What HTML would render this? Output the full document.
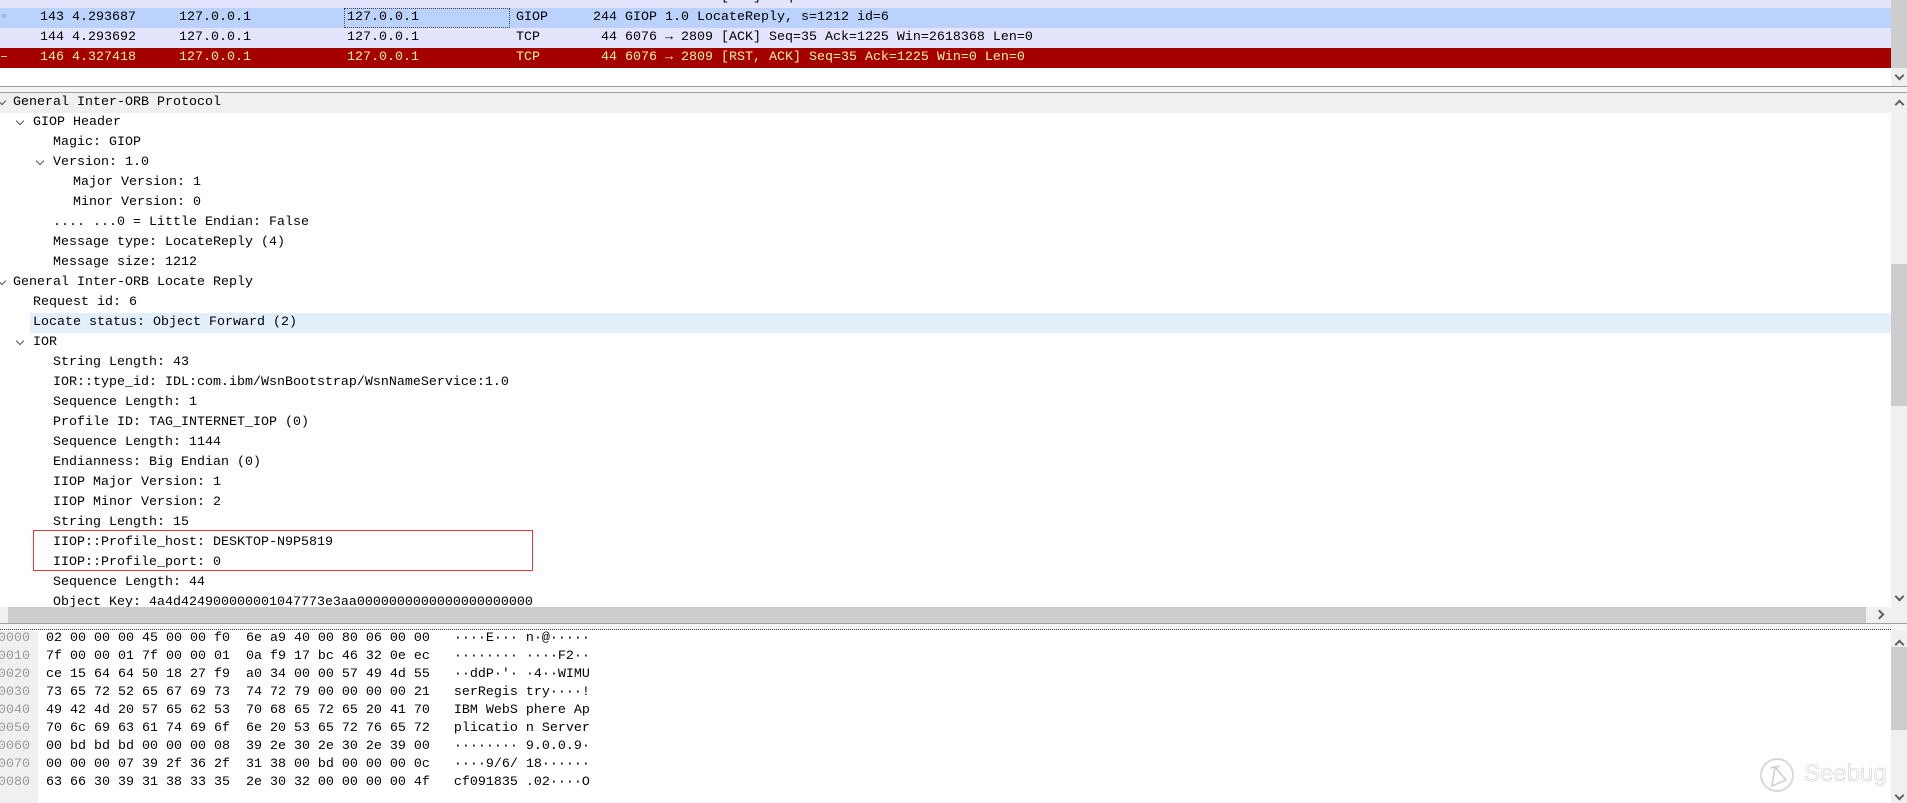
<!DOCTYPE html>
<html><head><meta charset="utf-8"><style>
*{margin:0;padding:0;box-sizing:border-box}
body{width:1907px;height:803px;overflow:hidden;background:#fff;font-family:"Liberation Mono",monospace;font-size:13.33px;color:#000;position:relative}
.abs{position:absolute}
.row{position:absolute;left:0;width:1891px;height:20px;line-height:20px;white-space:pre}
.row span{position:absolute;top:0}
.d{position:absolute;height:20px;line-height:20px;white-space:pre}
.arr{position:absolute;width:6px;height:6px;border-right:1.5px solid #555;border-bottom:1.5px solid #555;transform:rotate(45deg)}
.sb{position:absolute;background:#f0f0f0}
.chev{position:absolute;width:7px;height:7px;border-right:2px solid #606060;border-bottom:2px solid #606060}
pre{font-family:"Liberation Mono",monospace;font-size:13.33px;line-height:18px}
</style></head><body>

<!-- packet list -->
<div class="row" style="top:-12px;background:#e4e4fc"><span style="left:40px">142 4.293678</span><span style="left:179px">127.0.0.1</span><span style="left:347px">127.0.0.1</span><span style="left:516px">TCP</span><span style="left:601px">44 6076 → 2809 [ACK] Seq=35 Ack=1225 Win=2618624 Len=0</span></div>
<div class="row" style="top:8px;background:#bad2fc"><span style="left:0;color:#777">◦</span><span style="left:40px">143 4.293687</span><span style="left:179px">127.0.0.1</span><span style="left:344px;width:166px;height:20px;border:1px dotted #444;padding-left:2px;line-height:18px">127.0.0.1</span><span style="left:516px">GIOP</span><span style="left:593px">244 GIOP 1.0 LocateReply, s=1212 id=6</span></div>
<div class="row" style="top:28px;background:#e4e4fc"><span style="left:40px">144 4.293692</span><span style="left:179px">127.0.0.1</span><span style="left:347px">127.0.0.1</span><span style="left:516px">TCP</span><span style="left:601px">44 6076 → 2809 [ACK] Seq=35 Ack=1225 Win=2618368 Len=0</span></div>
<div class="row" style="top:48px;background:#a40000;color:#fff59d"><span style="left:0">–</span><span style="left:40px">146 4.327418</span><span style="left:179px">127.0.0.1</span><span style="left:347px">127.0.0.1</span><span style="left:516px">TCP</span><span style="left:601px">44 6076 → 2809 [RST, ACK] Seq=35 Ack=1225 Win=0 Len=0</span></div>
<div class="sb" style="left:1891px;top:0;width:16px;height:86px"></div>
<div class="abs" style="left:1891px;top:0;width:16px;height:68px;background:#cdcdcd"></div>
<div class="chev" style="left:1896px;top:72px;transform:rotate(45deg)"></div>
<div class="abs" style="left:0;top:86px;width:1907px;height:1px;background:#a0a0a0"></div>
<div class="abs" style="left:0;top:87px;width:1907px;height:5px;background:#f5f5f5"></div>
<div class="abs" style="left:0;top:92px;width:1907px;height:1px;background:#a0a0a0"></div>

<!-- details -->
<div class="abs" style="left:0;top:93px;width:1891px;height:20px;background:#f0f0f0"></div>
<div class="abs" style="left:30px;top:313px;width:1861px;height:20px;background:#e3f0fc"></div>
<div class="arr" style="left:-1px;top:98px"></div>
<div class="d" style="left:13px;top:93px">General Inter-ORB Protocol</div>
<div class="arr" style="left:17px;top:118px"></div>
<div class="d" style="left:33px;top:113px">GIOP Header</div>
<div class="d" style="left:53px;top:133px">Magic: GIOP</div>
<div class="arr" style="left:37px;top:158px"></div>
<div class="d" style="left:53px;top:153px">Version: 1.0</div>
<div class="d" style="left:73px;top:173px">Major Version: 1</div>
<div class="d" style="left:73px;top:193px">Minor Version: 0</div>
<div class="d" style="left:53px;top:213px">.... ...0 = Little Endian: False</div>
<div class="d" style="left:53px;top:233px">Message type: LocateReply (4)</div>
<div class="d" style="left:53px;top:253px">Message size: 1212</div>
<div class="arr" style="left:-1px;top:278px"></div>
<div class="d" style="left:13px;top:273px">General Inter-ORB Locate Reply</div>
<div class="d" style="left:33px;top:293px">Request id: 6</div>
<div class="d" style="left:33px;top:313px">Locate status: Object Forward (2)</div>
<div class="arr" style="left:17px;top:338px"></div>
<div class="d" style="left:33px;top:333px">IOR</div>
<div class="d" style="left:53px;top:353px">String Length: 43</div>
<div class="d" style="left:53px;top:373px">IOR::type_id: IDL:com.ibm/WsnBootstrap/WsnNameService:1.0</div>
<div class="d" style="left:53px;top:393px">Sequence Length: 1</div>
<div class="d" style="left:53px;top:413px">Profile ID: TAG_INTERNET_IOP (0)</div>
<div class="d" style="left:53px;top:433px">Sequence Length: 1144</div>
<div class="d" style="left:53px;top:453px">Endianness: Big Endian (0)</div>
<div class="d" style="left:53px;top:473px">IIOP Major Version: 1</div>
<div class="d" style="left:53px;top:493px">IIOP Minor Version: 2</div>
<div class="d" style="left:53px;top:513px">String Length: 15</div>
<div class="d" style="left:53px;top:533px">IIOP::Profile_host: DESKTOP-N9P5819</div>
<div class="d" style="left:53px;top:553px">IIOP::Profile_port: 0</div>
<div class="d" style="left:53px;top:573px">Sequence Length: 44</div>
<div class="d" style="left:53px;top:593px">Object Key: 4a4d424900000001047773e3aa0000000000000000000000</div>
<div class="abs" style="left:33px;top:530px;width:500px;height:41px;border:1px solid #e53935"></div>
<!-- detail scrollbars -->
<div class="sb" style="left:1891px;top:93px;width:16px;height:514px"></div>
<div class="chev" style="left:1896px;top:101px;transform:rotate(-135deg)"></div>
<div class="abs" style="left:1891px;top:264px;width:16px;height:142px;background:#cdcdcd"></div>
<div class="chev" style="left:1896px;top:593px;transform:rotate(45deg)"></div>
<div class="sb" style="left:0;top:607px;width:1907px;height:16px"></div>
<div class="abs" style="left:8px;top:607px;width:1858px;height:16px;background:#cdcdcd"></div>
<div class="chev" style="left:1876px;top:611px;transform:rotate(-45deg)"></div>
<div class="abs" style="left:0;top:623px;width:1907px;height:1px;background:#a0a0a0"></div>
<div class="abs" style="left:0;top:624px;width:1907px;height:5px;background:#f5f5f5"></div>
<div class="abs" style="left:0;top:629px;width:1891px;height:0;border-top:1px dotted #333"></div>

<!-- hex -->
<div class="abs" style="left:0;top:631px;width:38px;height:172px;background:#f0f0f0"></div>
<pre class="abs" style="left:-2px;top:630px"><span style="color:#999">0000</span>  02 00 00 00 45 00 00 f0  6e a9 40 00 80 06 00 00   ····E··· n·@·····
<span style="color:#999">0010</span>  7f 00 00 01 7f 00 00 01  0a f9 17 bc 46 32 0e ec   ········ ····F2··
<span style="color:#999">0020</span>  ce 15 64 64 50 18 27 f9  a0 34 00 00 57 49 4d 55   ··ddP·'· ·4··WIMU
<span style="color:#999">0030</span>  73 65 72 52 65 67 69 73  74 72 79 00 00 00 00 21   serRegis try····!
<span style="color:#999">0040</span>  49 42 4d 20 57 65 62 53  70 68 65 72 65 20 41 70   IBM WebS phere Ap
<span style="color:#999">0050</span>  70 6c 69 63 61 74 69 6f  6e 20 53 65 72 76 65 72   plicatio n Server
<span style="color:#999">0060</span>  00 bd bd bd 00 00 00 08  39 2e 30 2e 30 2e 39 00   ········ 9.0.0.9·
<span style="color:#999">0070</span>  00 00 00 07 39 2f 36 2f  31 38 00 bd 00 00 00 0c   ····9/6/ 18······
<span style="color:#999">0080</span>  63 66 30 39 31 38 33 35  2e 30 32 00 00 00 00 4f   cf091835 .02····O</pre>
<div class="sb" style="left:1891px;top:630px;width:16px;height:173px"></div>
<div class="chev" style="left:1896px;top:641px;transform:rotate(-135deg)"></div>
<div class="abs" style="left:1891px;top:647px;width:16px;height:83px;background:#cdcdcd"></div>
<div class="chev" style="left:1896px;top:792px;transform:rotate(45deg)"></div>

<!-- watermark -->
<svg class="abs" style="left:1758px;top:756px" width="40" height="40" viewBox="0 0 40 40"><circle cx="19" cy="19" r="16" fill="none" stroke="#d8d8d8" stroke-width="2"/><path d="M12 12 L22 10 M17 11 L14 30 L28 24 Z" fill="none" stroke="#d0d0d0" stroke-width="1.6"/></svg>
<div class="abs" style="left:1804px;top:760px;font-family:'Liberation Sans',sans-serif;font-size:24px;color:#e0e0e0;-webkit-text-stroke:0.6px #cfcfcf;color:#fff;line-height:28px">Seebug</div>
</body></html>
